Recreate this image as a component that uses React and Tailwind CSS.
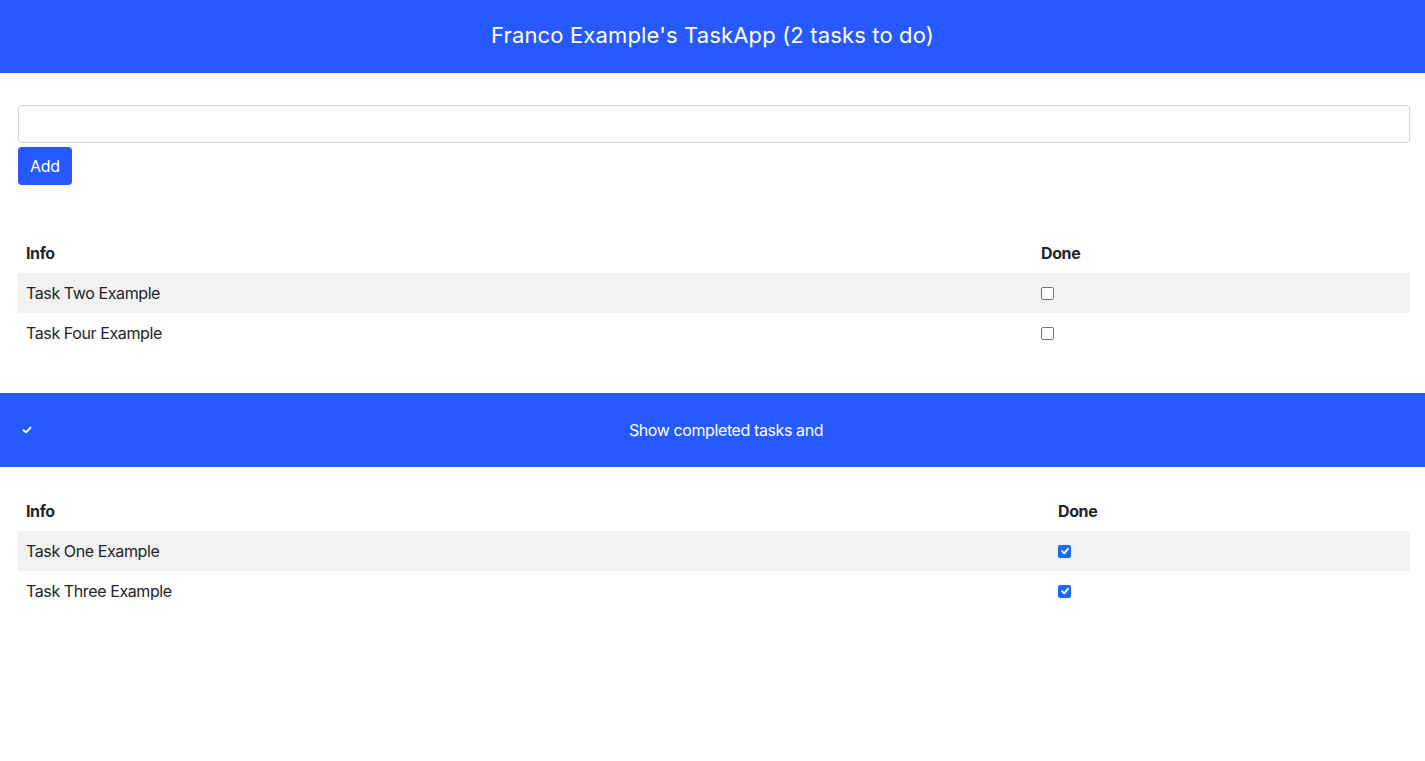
import React from "react";

const font = { fontFamily: "Inter, 'Noto Sans', sans-serif" };

function Box({ checked }) {
  if (checked) {
    return (
      <span className="inline-flex h-[13px] w-[13px] items-center justify-center rounded-[2px] bg-[#1a6cf5]">
        <svg width="10" height="10" viewBox="0 0 10 10">
          <path d="M2 5.2 L4.2 7.3 L8 2.8" fill="none" stroke="white" strokeWidth="1.8" strokeLinecap="round" strokeLinejoin="round" />
        </svg>
      </span>
    );
  }
  return <span className="inline-block h-[13px] w-[13px] rounded-[2px] border border-[#767676] bg-white" />;
}

function TaskTable({ rows, infoWidth }) {
  return (
    <table className="w-[1392px] border-collapse text-[16px] tracking-[-0.4px] text-[#212529]">
      <thead>
        <tr className="h-[40px]">
          <th className={`${infoWidth} px-2 text-left font-bold`}>Info</th>
          <th className="px-2 text-left font-bold">Done</th>
        </tr>
      </thead>
      <tbody>
        {rows.map((r, i) => (
          <tr key={r.name} className={`h-[40px] ${i % 2 === 0 ? "bg-[#f2f2f2]" : ""}`}>
            <td className="px-2">{r.name}</td>
            <td className="px-2">
              <div className="flex items-center">
                <Box checked={r.done} />
              </div>
            </td>
          </tr>
        ))}
      </tbody>
    </table>
  );
}

export default function App() {
  return (
    <div style={font} className="min-h-[761px] bg-white">
      <header className="flex h-[73px] items-center justify-center bg-[#2659ff]">
        <h1 className="-mt-[2px] text-[22px] font-normal tracking-[0.15px] text-white">Franco Example's TaskApp (2 tasks to do)</h1>
      </header>

      <div className="px-[18px] pt-[32px]">
        <input className="block h-[38px] w-[1392px] rounded-[4px] border border-[#ced4da] bg-white px-3" />
        <button className="mt-[4px] h-[38px] rounded-[4px] bg-[#2659ff] px-[12px] text-[16px] tracking-[-0.3px] text-white">Add</button>
      </div>

      <div className="px-[18px] pt-[48px]">
        <TaskTable
          infoWidth="w-[1015px]"
          rows={[
            { name: "Task Two Example", done: false },
            { name: "Task Four Example", done: false },
          ]}
        />
      </div>

      <div className="mt-[40px] flex h-[74px] items-center bg-[#2659ff] pl-[22px] pr-[5px]">
        <svg width="10" height="10" viewBox="0 0 10 10" className="shrink-0">
          <path d="M1.5 5.2 L4 7.3 L8.5 2.6" fill="none" stroke="white" strokeWidth="1.9" strokeLinecap="round" strokeLinejoin="round" />
        </svg>
        <div className="-mt-[1px] flex-1 text-center text-[16px] tracking-[-0.4px] text-white">Show completed tasks and</div>
      </div>

      <div className="px-[18px] pt-[24px]">
        <TaskTable
          infoWidth="w-[1032px]"
          rows={[
            { name: "Task One Example", done: true },
            { name: "Task Three Example", done: true },
          ]}
        />
      </div>
    </div>
  );
}
